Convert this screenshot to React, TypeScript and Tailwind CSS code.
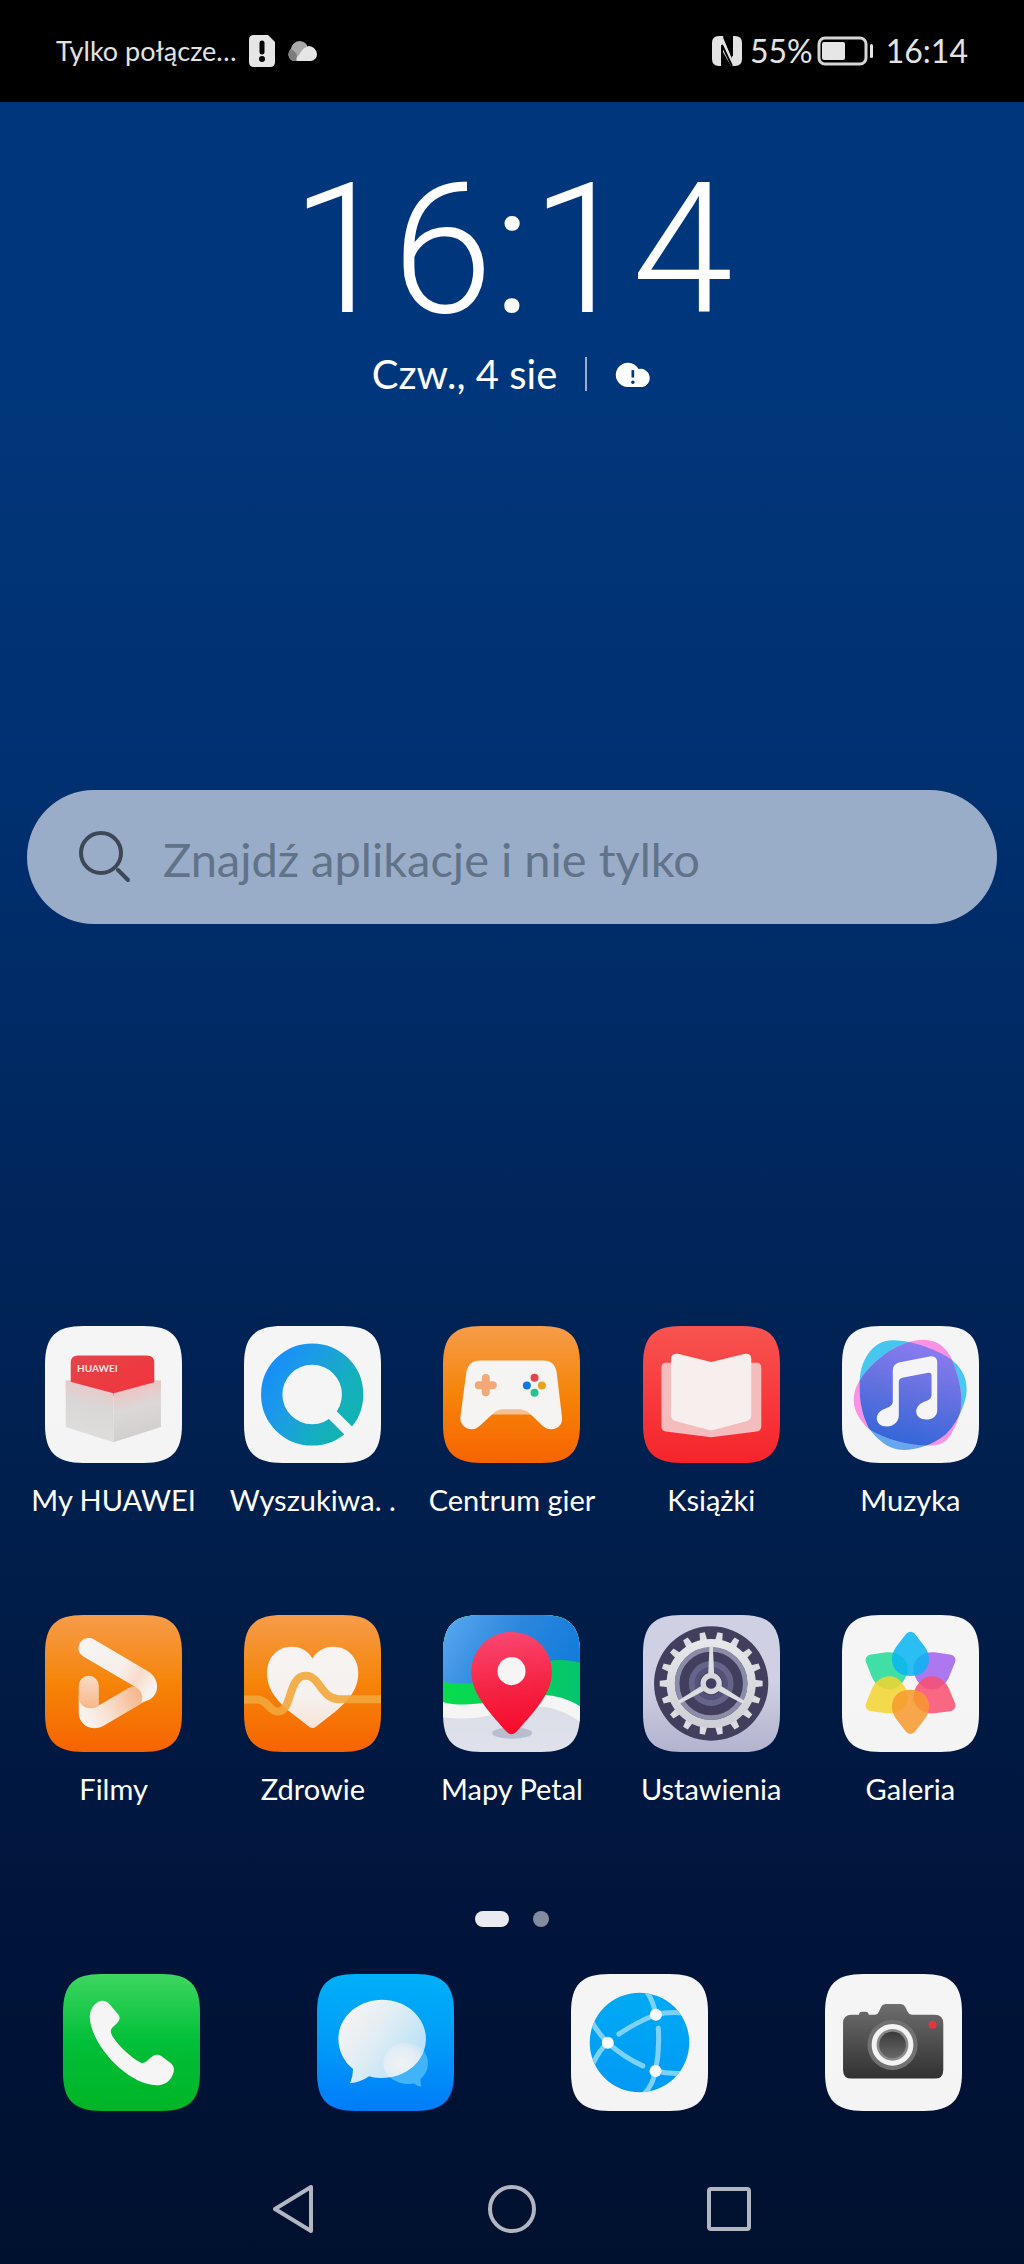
import React from 'react';

interface TileProps {
  id: string;
  from: string;
  mid?: string;
  to: string;
  children: React.ReactNode;
}

interface AppEntry {
  label: string;
  icon: React.ReactNode;
}

const SQUIRCLE =
  'M0 115C0 32 32 0 115 0H295C378 0 410 32 410 115V295C410 378 378 410 295 410H115C32 410 0 378 0 295Z';

// Rounded tile that every launcher icon is drawn on
const Tile: React.FC<TileProps> = ({ id, from, mid, to, children }) => (
  <svg viewBox="0 0 410 410" className="block size-[137px]" aria-hidden="true">
    <defs>
      <linearGradient id={`${id}-bg`} x1="0" y1="0" x2="0" y2="1">
        <stop offset="0" stopColor={from} />
        <stop offset="0.5" stopColor={mid ?? from} />
        <stop offset="1" stopColor={to} />
      </linearGradient>
      <clipPath id={`${id}-clip`}>
        <path d={SQUIRCLE} />
      </clipPath>
    </defs>
    <g clipPath={`url(#${id}-clip)`}>
      <rect width="410" height="410" fill={`url(#${id}-bg)`} />
      {children}
    </g>
  </svg>
);

const HuaweiIcon = () => (
  <Tile id="huawei" from="#f5f5f5" to="#f4f4f4">
    <defs>
      <linearGradient id="card" x1="0" y1="0" x2="1" y2="1">
        <stop offset="0" stopColor="#e2454a" />
        <stop offset="1" stopColor="#f5323a" />
      </linearGradient>
      <linearGradient id="box-left" x1="0.7" y1="0" x2="0.5" y2="1">
        <stop offset="0" stopColor="#f0c4c3" />
        <stop offset="0.4" stopColor="#d9d7d6" />
        <stop offset="1" stopColor="#dededd" />
      </linearGradient>
      <linearGradient id="box-right" x1="0.3" y1="0" x2="0.5" y2="1">
        <stop offset="0" stopColor="#f6bcbb" />
        <stop offset="0.45" stopColor="#dbd8d7" />
        <stop offset="1" stopColor="#cfcdcc" />
      </linearGradient>
    </defs>
    <path d="M62 163H347V185H62Z" fill="#cfcdcc" />
    <path d="M77 110Q77 88 99 88H305Q327 88 327 110V190L205 210L77 190Z" fill="url(#card)" />
    <text x="96" y="137" fill="#fbe4e4" fontSize="30" fontWeight="700" fontFamily="Lato, sans-serif">
      HUAWEI
    </text>
    <path d="M62 163L205 201V348L62 302Z" fill="url(#box-left)" />
    <path d="M347 163L205 201V348L347 302Z" fill="url(#box-right)" />
  </Tile>
);

const SearchAppIcon = () => (
  <Tile id="petal-search" from="#f5f5f5" to="#f4f4f4">
    <defs>
      <linearGradient id="q-ring" x1="60" y1="120" x2="320" y2="270" gradientUnits="userSpaceOnUse">
        <stop offset="0" stopColor="#168dfa" />
        <stop offset="0.35" stopColor="#1c9ae8" />
        <stop offset="0.8" stopColor="#15afbf" />
        <stop offset="1" stopColor="#12b2b4" />
      </linearGradient>
    </defs>
    <circle cx="204" cy="205" r="121" fill="none" stroke="url(#q-ring)" strokeWidth="64" />
    <path d="M250 251L340 341" stroke="#f4f4f4" strokeWidth="33" />
  </Tile>
);

const GamesIcon = () => (
  <Tile id="games" from="#f79c4a" mid="#f58408" to="#f76400">
    <path d="M130 270L165 250H245L285 270L255 265H150Z" fill="#f5c192" />
    <path
      d="M112 103H300C325 103 336 116 340 138L356 272C359 296 343 309 324 309C312 309 304 304 296 297L260 262C250 253 240 250 230 250H178C168 250 158 254 150 262L112 297C104 304 97 309 86 309C67 309 50 294 52 272L70 138C74 116 87 103 112 103Z"
      fill="#f6f4f3"
    />
    <path d="M128 156V198M107 177H149" stroke="#f2a877" strokeWidth="24" strokeLinecap="round" />
    <circle cx="274" cy="155" r="12" fill="#e2464f" />
    <circle cx="251" cy="178" r="12" fill="#1676e0" />
    <circle cx="296" cy="178" r="12" fill="#e8a41c" />
    <circle cx="274" cy="200" r="12" fill="#22c495" />
  </Tile>
);

const BooksIcon = () => (
  <Tile id="books" from="#f8544f" mid="#f73b3e" to="#f52429">
    <path
      d="M69 110H340Q354 110 354 126V300Q354 314 340 316L204 333L69 316Q55 314 55 300V126Q55 110 69 110Z"
      fill="#f4bcbd"
    />
    <path
      d="M104 83L204 108L306 83Q324 82 324 98V268Q324 280 312 284L204 313L96 284Q84 280 84 268V98Q84 82 104 83Z"
      fill="#f6efee"
    />
  </Tile>
);

const CYAN_BLOB =
  'M150 43C190 43 250 55 320 95C355 120 373 150 373 190C373 230 345 290 310 325C270 358 220 371 185 371C140 371 105 340 80 305C60 265 50 220 53 160C58 90 100 43 150 43Z';
const PINK_BLOB =
  'M245 41C290 41 315 70 328 98C345 140 357 180 357 225C357 270 335 315 315 340C300 355 280 358 262 358C200 358 130 340 80 308C50 280 35 250 35 222C35 195 45 175 55 160C90 105 170 41 245 41Z';

const MusicIcon = () => (
  <Tile id="music" from="#f5f5f5" to="#f4f4f4">
    <defs>
      <linearGradient id="blob-core" x1="0.6" y1="0" x2="0.35" y2="1">
        <stop offset="0" stopColor="#8d7cf2" />
        <stop offset="0.5" stopColor="#6170de" />
        <stop offset="1" stopColor="#2f66d8" />
      </linearGradient>
      <linearGradient id="blob-cyan" x1="0.5" y1="0" x2="0.5" y2="1">
        <stop offset="0" stopColor="#45c6f0" />
        <stop offset="0.5" stopColor="#48c9ee" />
        <stop offset="1" stopColor="#6aa2f0" />
      </linearGradient>
      <clipPath id="blob-overlap">
        <path d={CYAN_BLOB} />
      </clipPath>
    </defs>
    <path d={CYAN_BLOB} fill="url(#blob-cyan)" />
    <path d={PINK_BLOB} fill="#f991e4" />
    <path d={PINK_BLOB} fill="url(#blob-core)" clipPath="url(#blob-overlap)" />
    <path
      d="M152 134Q152 114 170 109L262 91Q285 88 285 110V252C285 270 270 280 253 280C234 280 222 270 222 256C222 240 236 230 250 225C262 221 268 216 268 204V148Q268 138 258 140L180 155Q170 158 170 168V268C170 288 152 301 135 301C116 301 104 290 104 277C104 262 116 252 130 247C144 242 152 238 152 224Z"
      fill="#f5f5f8"
    />
  </Tile>
);

const MoviesIcon = () => (
  <Tile id="movies" from="#f79c4a" mid="#f58408" to="#f76400">
    <defs>
      <linearGradient id="mv-low" x1="120" y1="310" x2="290" y2="230" gradientUnits="userSpaceOnUse">
        <stop offset="0" stopColor="#f8f3ef" />
        <stop offset="0.3" stopColor="#f8e5d8" />
        <stop offset="1" stopColor="#f7b488" />
      </linearGradient>
      <linearGradient id="mv-left" x1="0" y1="0" x2="0" y2="1">
        <stop offset="0" stopColor="#f9dcc6" />
        <stop offset="1" stopColor="#f6b78a" />
      </linearGradient>
      <linearGradient id="mv-top" x1="110" y1="90" x2="310" y2="230" gradientUnits="userSpaceOnUse">
        <stop offset="0" stopColor="#f6f4f3" />
        <stop offset="0.55" stopColor="#f7efea" />
        <stop offset="0.8" stopColor="#f8dccb" />
        <stop offset="1" stopColor="#f8f2ee" />
      </linearGradient>
    </defs>
    <path d="M101 240V292C101 330 138 350 174 332L304 256V214H258L162 270Z" fill="url(#mv-low)" />
    <path d="M101 212A30 30 0 0 1 161 212V273C140 284 106 282 101 250Z" fill="url(#mv-left)" />
    <path
      d="M147 73L308 168C344 190 344 236 312 254L288 262C296 246 290 226 272 216L116 125C102 116 97 103 102 90C109 70 130 64 147 73Z"
      fill="url(#mv-top)"
    />
  </Tile>
);

const HealthIcon = () => (
  <Tile id="health" from="#f79c4a" mid="#f58408" to="#f76400">
    <defs>
      <linearGradient id="heart" x1="0" y1="0" x2="0" y2="1">
        <stop offset="0" stopColor="#f6f4f3" />
        <stop offset="0.6" stopColor="#f6f1ee" />
        <stop offset="1" stopColor="#f6e3d8" />
      </linearGradient>
    </defs>
    <path
      d="M205 130C188 103 165 95 142 95C100 95 69 128 69 173C69 225 100 258 140 292L194 334Q205 343 216 334L270 292C310 258 342 225 342 173C342 128 310 95 268 95C245 95 222 103 205 130Z"
      fill="url(#heart)"
    />
    <path
      d="M0 253H40C70 253 76 289 102 289C146 289 130 182 185 182C228 182 230 252 285 252H410"
      fill="none"
      stroke="#f3a73b"
      strokeWidth="24"
      strokeOpacity="0.9"
    />
  </Tile>
);

const MapsIcon = () => (
  <Tile id="maps" from="#d9dbe6" to="#dfe2ea">
    <defs>
      <linearGradient id="sea" x1="0" y1="0.2" x2="1" y2="0.5">
        <stop offset="0" stopColor="#56a6ee" />
        <stop offset="0.5" stopColor="#2c87dc" />
        <stop offset="1" stopColor="#147cdc" />
      </linearGradient>
      <linearGradient id="land" x1="0" y1="0" x2="1" y2="0">
        <stop offset="0" stopColor="#08dd4c" />
        <stop offset="1" stopColor="#06c46c" />
      </linearGradient>
      <linearGradient id="pin" x1="0.4" y1="0" x2="0.5" y2="1">
        <stop offset="0" stopColor="#fb4670" />
        <stop offset="0.6" stopColor="#f5203f" />
        <stop offset="1" stopColor="#f80a2a" />
      </linearGradient>
    </defs>
    <path d="M0 0H410V320C370 290 320 272 270 274C200 276 150 308 60 310Q25 310 0 305Z" fill="#f5f5f5" />
    <path d="M0 0H410V273C370 250 330 238 290 240C220 244 150 266 60 268Q25 268 0 260Z" fill="url(#land)" />
    <path d="M0 0H410V143C370 132 320 130 280 150C220 180 160 206 60 205Q25 205 0 200Z" fill="url(#sea)" />
    <ellipse cx="207" cy="353" rx="60" ry="17" fill="#b9bdd0" />
    <path
      d="M205 51C272 51 326 104 326 171C326 240 262 300 219 350Q205 364 191 350C148 300 85 240 85 171C85 104 138 51 205 51Z"
      fill="url(#pin)"
    />
    <circle cx="205" cy="168" r="42" fill="#f6f4f5" />
  </Tile>
);

const TEETH = Array.from({ length: 18 }, (_, i) => i * 20);

const SettingsIcon = () => (
  <Tile id="settings" from="#cfd0e3" to="#b2b3cd">
    <defs>
      <linearGradient id="gear" x1="0" y1="0" x2="0" y2="1">
        <stop offset="0" stopColor="#e6e7ea" />
        <stop offset="1" stopColor="#cfd0d6" />
      </linearGradient>
    </defs>
    <g transform="translate(204 205)">
      <circle r="171" fill="#423f5e" />
      {TEETH.map((angle) => (
        <path key={angle} d="M-11 -128L-8 -154H8L11 -128Z" transform={`rotate(${angle + 10})`} fill="#dcdde1" />
      ))}
      <circle r="121" fill="none" stroke="url(#gear)" strokeWidth="25" />
      <circle r="102" fill="none" stroke="#8b8ca8" strokeWidth="14" />
      <circle r="58" fill="none" stroke="#65658a" strokeWidth="18" />
      <circle r="42" fill="none" stroke="#54527a" strokeWidth="14" />
      {[0, 120, 240].map((angle) => (
        <path key={angle} d="M-5 -112H5L9 -24H-9Z" transform={`rotate(${angle})`} fill="#dcdde1" />
      ))}
      <circle r="24" fill="#423f5e" stroke="#d6d7dc" strokeWidth="16" />
    </g>
  </Tile>
);

const PETALS = [
  { angle: 300, color: '#22db98' },
  { angle: 240, color: '#f3d430' },
  { angle: 60, color: '#a163ee' },
  { angle: 120, color: '#f94f70' },
  { angle: 180, color: '#f79a2c' },
  { angle: 0, color: '#08b4f2' },
];

const GalleryIcon = () => (
  <Tile id="gallery" from="#f5f5f5" to="#f4f4f4">
    {PETALS.map(({ angle, color }) => (
      <path
        key={angle}
        d="M-12 -148Q0 -158 12 -148L40 -112C62 -86 60 -50 38 -32C18 -17 -18 -17 -38 -32C-60 -50 -62 -86 -40 -112Z"
        transform={`translate(205 203) rotate(${angle})`}
        fill={color}
        fillOpacity="0.86"
      />
    ))}
  </Tile>
);

const PhoneIcon = () => (
  <Tile id="phone" from="#3dd660" mid="#00bf38" to="#00b426">
    <path
      d="M80 127C82 95 105 78 120 80C136 82 140 92 166 122C174 134 168 142 150 158C140 168 142 175 148 186C170 220 205 250 232 265C240 269 247 265 256 256C270 242 282 238 295 246L322 266C334 276 334 288 328 302C318 325 300 333 280 333C190 330 82 210 80 127Z"
      fill="#f5f5f5"
    />
  </Tile>
);

const MessagesIcon = () => (
  <Tile id="messages" from="#00b0f8" mid="#009cf8" to="#007cf8">
    <defs>
      <linearGradient id="bubble" x1="0.15" y1="0.2" x2="0.95" y2="0.75">
        <stop offset="0" stopColor="#f2f2f3" />
        <stop offset="0.4" stopColor="#e0edf4" />
        <stop offset="1" stopColor="#b2e0f8" />
      </linearGradient>
      <clipPath id="bubble-clip">
        <ellipse cx="195" cy="194" rx="131" ry="117" />
      </clipPath>
      <radialGradient id="bubble-glow" cx="0.4" cy="0.5" r="0.6">
        <stop offset="0" stopColor="#f0f3f5" />
        <stop offset="0.6" stopColor="#e2eef4" />
        <stop offset="1" stopColor="#c4e5f6" />
      </radialGradient>
    </defs>
    <path
      d="M265 204C302 204 332 232 332 267C332 288 322 303 310 314Q308 326 313 337Q300 336 290 328C250 336 198 310 198 267C198 232 228 204 265 204Z"
      fill="#41b4f9"
    />
    <path
      d="M195 77C267 77 326 129 326 194C326 259 267 311 195 311Q172 312 156 306Q130 324 99 327Q108 306 108 284C80 264 64 228 64 194C64 129 123 77 195 77Z"
      fill="url(#bubble)"
    />
    <ellipse cx="265" cy="267" rx="67" ry="63" fill="url(#bubble-glow)" clipPath="url(#bubble-clip)" />
  </Tile>
);

const BrowserIcon = () => (
  <Tile id="browser" from="#f5f5f5" to="#f4f4f4">
    <defs>
      <linearGradient id="globe" x1="0" y1="0" x2="0" y2="1">
        <stop offset="0" stopColor="#00aaf3" />
        <stop offset="1" stopColor="#009af6" />
      </linearGradient>
      <clipPath id="globe-clip">
        <circle cx="205" cy="205" r="149" />
      </clipPath>
    </defs>
    <circle cx="205" cy="205" r="149" fill="url(#globe)" />
    <g clipPath="url(#globe-clip)" fill="none" stroke="#7dd2fc" strokeWidth="15" strokeLinecap="round">
      <path d="M226 52Q246 80 254 122Q290 112 340 117" />
      <path d="M254 122Q196 144 143 180" />
      <path d="M60 140Q84 180 110 206Q84 228 66 268" />
      <path d="M110 206Q160 250 215 275" />
      <path d="M261 162Q266 226 253 290Q290 300 335 297" />
      <path d="M253 290Q246 328 222 356" />
    </g>
    <circle cx="254" cy="122" r="18" fill="#fafdff" />
    <circle cx="110" cy="206" r="18" fill="#fafdff" />
    <circle cx="253" cy="290" r="18" fill="#fafdff" />
  </Tile>
);

const CameraIcon = () => (
  <Tile id="camera" from="#f5f5f5" to="#f4f4f4">
    <defs>
      <linearGradient id="cam-body" x1="0" y1="90" x2="0" y2="313" gradientUnits="userSpaceOnUse">
        <stop offset="0" stopColor="#6e6e6e" />
        <stop offset="1" stopColor="#313131" />
      </linearGradient>
      <linearGradient id="cam-lens" x1="0" y1="0" x2="0" y2="1">
        <stop offset="0" stopColor="#3a3a3a" />
        <stop offset="1" stopColor="#686868" />
      </linearGradient>
    </defs>
    <path
      d="M80 122H102Q102 113 110 113H122Q130 113 131 122H150Q158 121 162 112L168 98Q172 90 182 90H226Q236 90 240 98L247 112Q251 121 260 122H328Q354 122 354 148V287Q354 313 328 313H80Q54 313 54 287V148Q54 122 80 122Z"
      fill="url(#cam-body)"
    />
    <circle cx="202" cy="212" r="75" fill="#717171" />
    <circle cx="202" cy="212" r="55" fill="#8a8a8a" stroke="#f3f3f3" strokeWidth="15" />
    <circle cx="202" cy="212" r="40" fill="url(#cam-lens)" />
    <circle cx="322" cy="152" r="12" fill="#e8343f" />
  </Tile>
);

const apps: AppEntry[] = [
  { label: 'My HUAWEI', icon: <HuaweiIcon /> },
  { label: 'Wyszukiwa. .', icon: <SearchAppIcon /> },
  { label: 'Centrum gier', icon: <GamesIcon /> },
  { label: 'Książki', icon: <BooksIcon /> },
  { label: 'Muzyka', icon: <MusicIcon /> },
  { label: 'Filmy', icon: <MoviesIcon /> },
  { label: 'Zdrowie', icon: <HealthIcon /> },
  { label: 'Mapy Petal', icon: <MapsIcon /> },
  { label: 'Ustawienia', icon: <SettingsIcon /> },
  { label: 'Galeria', icon: <GalleryIcon /> },
];

const dock: AppEntry[] = [
  { label: 'Telefon', icon: <PhoneIcon /> },
  { label: 'Wiadomości', icon: <MessagesIcon /> },
  { label: 'Przeglądarka', icon: <BrowserIcon /> },
  { label: 'Aparat', icon: <CameraIcon /> },
];

const StatusBar = () => (
  <header className="flex h-[102px] items-center justify-between bg-black px-14 text-[#e3e3e3]">
    <div className="flex items-center gap-3">
      <span className="text-[27px] leading-8">Tylko połącze…</span>
      <svg viewBox="0 0 26 32" className="h-8 w-[26px]" aria-hidden="true">
        <path d="M5 0H19L26 7V27Q26 32 21 32H5Q0 32 0 27V5Q0 0 5 0Z" fill="#e6e6e6" />
        <path d="M13 8V17" stroke="#000" strokeWidth="5" strokeLinecap="round" />
        <circle cx="13" cy="24" r="3" fill="#000" />
      </svg>
      <svg viewBox="0 0 30 20" className="h-5 w-[30px]" aria-hidden="true">
        <path d="M6 20A7 7 0 0 1 4 8A9 9 0 0 1 13 0A9 9 0 0 1 21 7L18 20Z" fill="#a9a9a9" />
        <path d="M6 20A7 7 0 0 1 4 8Q12 12 10 20Z" fill="#7d7d7d" />
        <path d="M10 20Q8 17 12 14Q16 6 22 5A9 9 0 0 1 30 13A7 7 0 0 1 24 20Z" fill="#e6e6e6" />
      </svg>
    </div>
    <div className="flex items-center">
      <svg viewBox="0 0 30 30" className="mr-2 size-[30px]" aria-hidden="true">
        <path d="M7 0H10V30H7Q0 30 0 23V7Q0 0 7 0Z" fill="#e3e3e3" />
        <path d="M20 0H23Q30 0 30 7V23Q30 30 23 30H20Z" fill="#e3e3e3" />
        <path d="M7 0H11L23 30H19L7 9Z" fill="#e3e3e3" />
        <path d="M10 30V9L20 30M20 0V20L12 1" fill="none" stroke="#000" strokeWidth="2" />
      </svg>
      <span className="mr-1 text-[32px] leading-10">55%</span>
      <svg viewBox="0 0 57 30" className="mr-3 h-[30px] w-[57px]" aria-hidden="true">
        <rect x="2" y="2" width="47" height="26" rx="6" fill="none" stroke="#d6d6d6" strokeWidth="3" />
        <rect x="5" y="6" width="23" height="18" rx="2" fill="#e6e6e6" />
        <rect x="53" y="8" width="3" height="14" rx="1.5" fill="#e6e6e6" />
      </svg>
      <span className="text-[32px] leading-10">16:14</span>
    </div>
  </header>
);

const ClockWidget = () => (
  <section className="mt-14 flex flex-col items-center text-white">
    <time className="font-[Roboto,sans-serif] text-[182px] font-light leading-[184px]">16:14</time>
    <div className="mt-2 flex items-center">
      <span className="text-[40px] leading-[48px]">Czw., 4 sie</span>
      <span className="mx-7 h-[34px] w-[2px] bg-white/60" />
      <svg viewBox="0 0 110 74" className="h-[25px] w-[37px]" aria-label="Pogoda">
        <path d="M36 74A36 36 0 1 1 70 21A27 27 0 1 1 82 74Z" fill="#fff" />
        <path d="M53 24V46" stroke="#00377c" strokeWidth="8" />
        <circle cx="53" cy="60" r="5" fill="#00377c" />
      </svg>
    </div>
  </section>
);

const SearchBar = () => (
  <form
    role="search"
    onSubmit={(e) => e.preventDefault()}
    className="mx-[27px] flex h-[134px] items-center gap-8 rounded-full bg-[#9aadc8] px-[52px]"
  >
    <svg viewBox="0 0 52 52" className="size-[52px] shrink-0" fill="none" stroke="#3c4855" aria-hidden="true">
      <circle cx="22" cy="22" r="20" strokeWidth="4" />
      <path d="M39 39L49 49" strokeWidth="4" strokeLinecap="round" />
    </svg>
    <input
      type="text"
      aria-label="Znajdź aplikacje i nie tylko"
      placeholder="Znajdź aplikacje i nie tylko"
      className="min-w-0 flex-1 bg-transparent pt-1 text-[47px] leading-[56px] text-[#3c4855] outline-none placeholder:text-[#607389]"
    />
  </form>
);

const NavBar = () => (
  <nav className="mx-auto mt-[66px] grid w-[651px] max-w-full grid-cols-3 pb-5 text-[#b1b6c1]">
    <button type="button" aria-label="Wstecz" className="flex h-16 items-center justify-center">
      <svg viewBox="0 0 48 48" className="size-12" fill="none" stroke="currentColor" strokeWidth="4">
        <path d="M40 2V46L4 24Z" strokeLinejoin="round" />
      </svg>
    </button>
    <button type="button" aria-label="Ekran główny" className="flex h-16 items-center justify-center">
      <svg viewBox="0 0 48 48" className="size-12" fill="none" stroke="currentColor" strokeWidth="4">
        <circle cx="24" cy="24" r="22" />
      </svg>
    </button>
    <button type="button" aria-label="Ostatnie" className="flex h-16 items-center justify-center">
      <svg viewBox="0 0 48 48" className="size-12" fill="none" stroke="currentColor" strokeWidth="4">
        <rect x="4" y="4" width="40" height="40" rx="2" />
      </svg>
    </button>
  </nav>
);

const App: React.FC = () => {
  return (
    <div className="flex min-h-screen flex-col bg-[linear-gradient(180deg,#00377c_0%,#00377c_16%,#002f6e_37%,#002254_60%,#001c47_72%,#00143a_86%,#00112f_100%)] font-[Lato,'Noto_Sans',sans-serif]">
      <StatusBar />
      <main>
        <ClockWidget />
        <div className="mt-[392px]">
          <SearchBar />
        </div>

        {/* Home screen apps */}
        <div className="mt-[402px] grid grid-cols-5 gap-y-[98px] px-3.5">
          {apps.map((app) => (
            <button key={app.label} type="button" className="flex flex-col items-center text-white">
              {app.icon}
              <span className="mt-5 whitespace-nowrap text-[29px] leading-[34px]">{app.label}</span>
            </button>
          ))}
        </div>

        {/* Page indicator */}
        <div className="mt-[105px] flex items-center justify-center gap-6">
          <span className="h-4 w-[34px] rounded-full bg-[#e9ebf0]" />
          <span className="size-4 rounded-full bg-[#838b9e]" />
        </div>

        {/* Dock */}
        <div className="mt-[47px] grid grid-cols-4 px-1">
          {dock.map((app) => (
            <button key={app.label} type="button" aria-label={app.label} className="flex justify-center">
              {app.icon}
            </button>
          ))}
        </div>
      </main>
      <NavBar />
    </div>
  );
};

export default App;
